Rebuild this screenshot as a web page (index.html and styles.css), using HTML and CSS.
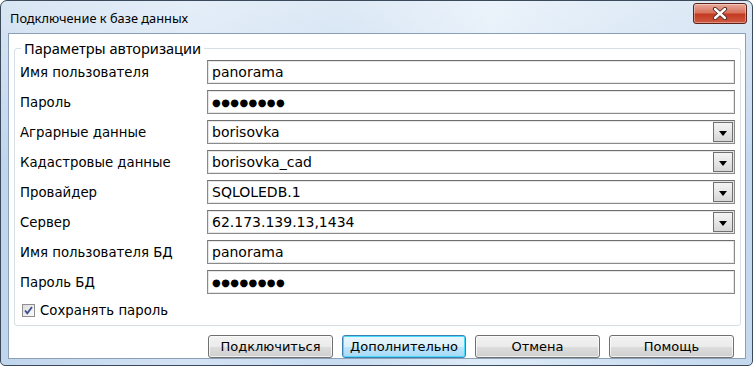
FILE: index.html
```html
<html lang="ru">
<head>
  <meta charset="UTF-8" />
  <title>Подключение к базе данных</title>
  <link rel="stylesheet" href="styles.css">
</head>
<body>
  <div class="window">
    <div class="titlebar">
      <span class="title">Подключение к базе данных</span>
      <div class="close">
        <svg width="20" height="13" viewBox="0 0 20 13">
          <path d="M5 2 L15 11 M15 2 L5 11" stroke="#4a2a25" stroke-width="4.2" stroke-linecap="round"/>
          <path d="M5 2 L15 11 M15 2 L5 11" stroke="#fff" stroke-width="2.4" stroke-linecap="round"/>
        </svg>
      </div>
    </div>

    <div class="client">
      <fieldset class="group">
        <legend>Параметры авторизации</legend>
        <div class="form">
          <label>Имя пользователя</label>
          <div class="field">panorama</div>

          <label>Пароль</label>
          <div class="field secret">●●●●●●●●</div>

          <label>Аграрные данные</label>
          <div class="field combo">borisovka<span class="drop"></span></div>

          <label>Кадастровые данные</label>
          <div class="field combo">borisovka_cad<span class="drop"></span></div>

          <label>Провайдер</label>
          <div class="field combo">SQLOLEDB.1<span class="drop"></span></div>

          <label>Сервер</label>
          <div class="field combo">62.173.139.13,1434<span class="drop"></span></div>

          <label>Имя пользователя БД</label>
          <div class="field">panorama</div>

          <label>Пароль БД</label>
          <div class="field secret">●●●●●●●●</div>

          <div class="check-row">
            <span class="checkbox">
              <svg width="11" height="11" viewBox="0 0 11 11">
                <path d="M2 5.5 L4.3 8.2 L9 2" fill="none" stroke="#3a4f8c" stroke-width="1.8"/>
              </svg>
            </span>
            Сохранять пароль
          </div>
        </div>
      </fieldset>

      <div class="buttons">
        <button>Подключиться</button>
        <button class="default">Дополнительно</button>
        <button>Отмена</button>
        <button>Помощь</button>
      </div>
    </div>
  </div>
</body>
</html>
```

FILE: styles.css
```css
* { box-sizing: border-box; }

body {
  margin: 0;
  background: #fff;
  font-family: 'DejaVu Sans', sans-serif;
  font-size: 13px;
  color: #000;
}

.window {
  width: 753px;
  height: 366px;
  border: 1px solid #3a4a5b;
  border-radius: 7px 7px 5px 5px;
  padding: 0 6px 6px 7px;
  display: flex;
  flex-direction: column;
  background:
    linear-gradient(180deg, rgba(255,255,255,0.45), rgba(255,255,255,0.1) 45%),
    linear-gradient(90deg, #b9d1ea 0%, #cfe0f3 25%, #c2d8ee 45%, #dbe9f7 65%, #c8dcf0 85%, #bdd4ec 100%);
}

.titlebar {
  height: 32px;
  display: flex;
  justify-content: space-between;
  align-items: flex-start;
}

.title {
  font-family: 'Noto Sans', sans-serif;
  font-size: 12.8px;
  padding: 8px 0 0 2px;
  color: #000;
}

.close {
  width: 54px;
  height: 21px;
  margin: 2px -1px 0 0;
  border: 1px solid #5d2219;
  border-radius: 3px;
  display: flex;
  align-items: center;
  justify-content: center;
  background: linear-gradient(180deg, #e9a99b 0%, #d8735e 45%, #c43a22 55%, #d05a42 100%);
  box-shadow: inset 0 0 0 1px rgba(255,255,255,0.35);
}

.client {
  flex: 1;
  background: #fff;
  border: 1px solid #8ba0b6;
  display: flex;
  flex-direction: column;
}

.group {
  margin: 5px 4px 0 5px;
  padding: 3px 5px 1px 5px;
  border: 1px solid #d5dfe5;
  border-radius: 3px;
}

.group legend {
  font-family: 'Noto Sans', sans-serif;
  font-size: 14.6px;
  line-height: 18px;
  padding: 0 3px;
  margin-left: 1px;
}

.form {
  display: grid;
  grid-template-columns: 187px 1fr;
  grid-auto-rows: 24px;
  row-gap: 6px;
}

.form label {
  display: flex;
  align-items: center;
  font-size: 13.3px;
}

.field {
  position: relative;
  border: 1px solid #8a8a8a;
  border-top-color: #6f6f6f;
  box-shadow: inset 0 0 0 1px #e6e6e6;
  padding: 0 4px;
  display: flex;
  align-items: center;
  font-size: 14px;
  background: #fff;
}

.secret {
  font-size: 10px;
  letter-spacing: 0.4px;
}

.drop {
  position: absolute;
  top: 1px;
  right: 1px;
  bottom: 1px;
  width: 20px;
  border: 1px solid #707070;
  background: linear-gradient(180deg, #f4f4f4 0%, #e6e6e6 50%, #d6d6d6 100%);
}

.drop::after {
  content: '';
  position: absolute;
  left: 5px;
  top: 8px;
  border-left: 4px solid transparent;
  border-right: 4px solid transparent;
  border-top: 5px solid #000;
}

.check-row {
  grid-column: 1 / 3;
  height: 18px;
  margin-top: 1px;
  display: flex;
  align-items: center;
  gap: 5px;
  padding-left: 2px;
  font-size: 13.3px;
}

.checkbox {
  width: 13px;
  height: 13px;
  border: 1px solid #8f8f8f;
  background: linear-gradient(135deg, #dcdcdc, #fbfbfb);
  display: flex;
  align-items: center;
  justify-content: center;
}

.buttons {
  display: flex;
  justify-content: flex-end;
  gap: 9px;
  margin-top: 9px;
  padding-right: 11px;
}

button {
  width: 125px;
  height: 23px;
  font-family: 'DejaVu Sans', sans-serif;
  font-size: 13px;
  color: #000;
  border: 1px solid #707070;
  border-radius: 3px;
  background: linear-gradient(180deg, #f2f2f2 0%, #ebebeb 50%, #dddddd 51%, #cfcfcf 100%);
  box-shadow: inset 0 0 0 1px rgba(255,255,255,0.7);
  padding: 0;
}

button.default {
  width: 124px;
  border-color: #3c7fb1;
  background: linear-gradient(180deg, #eaf6fd 0%, #d9f0fc 50%, #bee6fd 51%, #a7d9f5 100%);
  box-shadow: inset 0 0 0 1px #48dbfa;
}
```
